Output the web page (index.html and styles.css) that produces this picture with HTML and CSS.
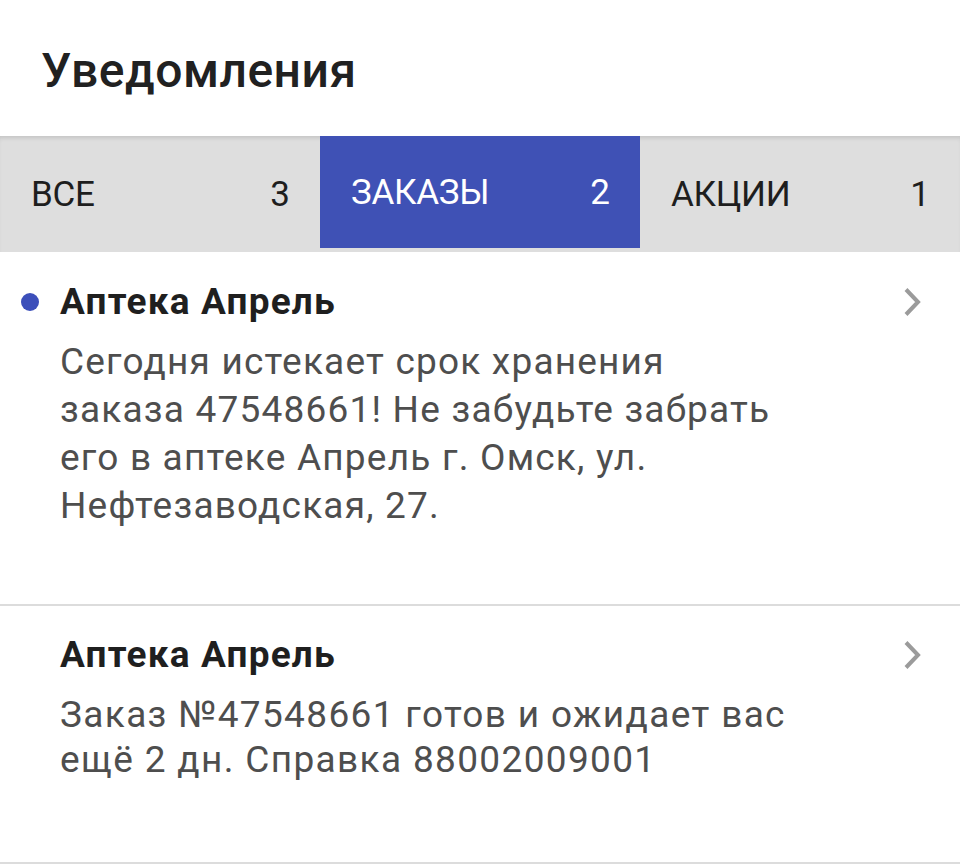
FILE: index.html
```html
<!DOCTYPE html>
<html lang="ru">
<head>
<meta charset="utf-8">
<title>Уведомления</title>
<link rel="stylesheet" href="styles.css">
</head>
<body>
<header class="header">
  <h1 class="title">Уведомления</h1>
</header>
<nav class="tabs">
  <div class="tab"><span class="tab-label">ВСЕ</span><span class="tab-count">3</span></div>
  <div class="tab tab-active"><span class="tab-label">ЗАКАЗЫ</span><span class="tab-count">2</span></div>
  <div class="tab"><span class="tab-label">АКЦИИ</span><span class="tab-count">1</span></div>
</nav>
<main class="list">
  <article class="item">
    <div class="gutter"><span class="dot"></span></div>
    <div class="content">
      <div class="item-title">Аптека Апрель</div>
      <p class="item-text">Сегодня истекает срок хранения<br>заказа 47548661! Не забудьте забрать<br>его в аптеке Апрель г. Омск, ул.<br>Нефтезаводская, 27.</p>
    </div>
    <div class="chev">
      <svg width="22" height="30" viewBox="0 0 22 30"><path d="M4 2.5 L16 15 L4 27.5" fill="none" stroke="#9b9b9b" stroke-width="4"/></svg>
    </div>
  </article>
  <article class="item item-short">
    <div class="gutter"></div>
    <div class="content">
      <div class="item-title">Аптека Апрель</div>
      <p class="item-text">Заказ №47548661 готов и ожидает вас<br>ещё 2 дн. Справка 88002009001</p>
    </div>
    <div class="chev">
      <svg width="22" height="30" viewBox="0 0 22 30"><path d="M4 2.5 L16 15 L4 27.5" fill="none" stroke="#9b9b9b" stroke-width="4"/></svg>
    </div>
  </article>
</main>
</body>
</html>
```
FILE: styles.css
```css
* { box-sizing: border-box; }
html, body { margin: 0; padding: 0; background: #fff; }
body { font-family: Roboto, "Noto Sans", sans-serif; width: 960px; }

.header {
  height: 136px;
  display: flex;
  align-items: center;
  padding-left: 41px;
}
.title {
  margin: 0;
  font-size: 48px;
  font-weight: 500;
  color: #212121;
  letter-spacing: 0.5px;
  padding-top: 4px;
}

.tabs {
  display: grid;
  grid-template-columns: repeat(3, 1fr);
  height: 116px;
  background: #dedede;
  box-shadow: inset 0 4px 4px -2px rgba(0,0,0,0.12);
  align-items: start;
}
.tab {
  height: 116px;
  display: flex;
  align-items: center;
  justify-content: space-between;
  padding: 0 30px 0 31px;
  font-size: 35px;
  color: #1e1e1e;
}
.tab-active {
  height: 112px;
  background: #3f51b5;
  color: #fff;
}
.tab-label { letter-spacing: -0.3px; }

.item {
  display: grid;
  grid-template-columns: 60px 1fr 80px;
  border-bottom: 2px solid #dcdcdc;
  padding: 26px 0 74px;
}
.item-short { padding: 25px 0 80px; }
.gutter {
  display: flex;
  justify-content: center;
  padding-top: 15px;
}
.dot {
  width: 18px;
  height: 18px;
  border-radius: 50%;
  background: #3c4fba;
}
.item-title {
  font-size: 37px;
  font-weight: 700;
  color: #1f1f1f;
  line-height: 48px;
  letter-spacing: 1.2px;
}
.item-text {
  margin: 12px 0 0;
  font-size: 37px;
  line-height: 48px;
  letter-spacing: 1.2px;
  color: #4e4e4e;
}
.item-short .item-text { line-height: 45px; margin-top: 13px; letter-spacing: 1.35px; }
.chev {
  padding-top: 9px;
  padding-left: 22px;
}
```
